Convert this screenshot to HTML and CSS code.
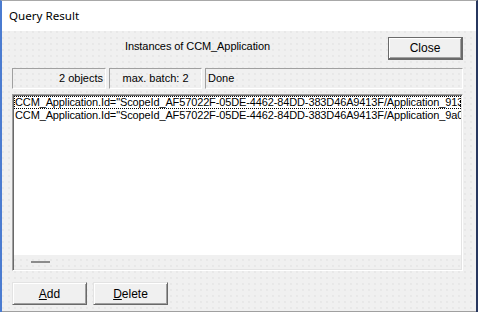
FILE: index.html
```html
<!DOCTYPE html>
<html>
<head>
<meta charset="utf-8">
<link rel="stylesheet" href="styles.css">
</head>
<body>
<div class="window">
  <div class="titlebar">Query Result</div>
  <div class="client">
    <div class="top-row">
      <div class="heading">Instances of CCM_Application</div>
      <button class="btn btn-default">Close</button>
    </div>
    <div class="statusbar">
      <div class="panel panel-count">2 objects</div>
      <div class="panel panel-batch">max. batch: 2</div>
      <div class="panel panel-state">Done</div>
    </div>
    <div class="listbox">
      <div class="list-items">
        <div class="item item-focus">CCM_Application.Id="ScopeId_AF57022F-05DE-4462-84DD-383D46A9413F/Application_913</div>
        <div class="item">CCM_Application.Id="ScopeId_AF57022F-05DE-4462-84DD-383D46A9413F/Application_9a0</div>
      </div>
      <div class="hscroll"><span class="thumb"></span></div>
    </div>
    <div class="bottom-row">
      <button class="btn"><u>A</u>dd</button>
      <button class="btn"><u>D</u>elete</button>
    </div>
  </div>
</div>
</body>
</html>
```
FILE: styles.css
```css
html, body {
  margin: 0;
  padding: 0;
  width: 478px;
  height: 312px;
  overflow: hidden;
  background: #f0f0f0;
}
.window {
  box-sizing: border-box;
  width: 478px;
  height: 312px;
  border-left: 2px solid #4a7bd0;
  border-right: 2px solid #27375f;
  border-top: 1px solid #a8a8a8;
  display: flex;
  flex-direction: column;
  font-family: "Liberation Sans", Arial, sans-serif;
  font-size: 11px;
  color: #000;
}
.titlebar {
  height: 30px;
  background: #fff;
  font-family: "Noto Sans", "Open Sans", sans-serif;
  font-size: 11.6px;
  line-height: 30px;
  padding-left: 7px;
  flex: none;
}
.client {
  flex: 1;
  display: flex;
  flex-direction: column;
  padding: 6px 13px 0 10px;
  border-bottom: 1px solid #a0a0a0;
  background-color: #f0f0f0;
  background-image: radial-gradient(circle at 1px 1px, #e3e3e3 0.6px, transparent 0.9px);
  background-size: 6px 6px;
}
.top-row {
  display: flex;
  align-items: flex-start;
  gap: 5px;
}
.heading {
  flex: 1;
  text-align: center;
  padding-top: 3px;
  line-height: 13px;
  letter-spacing: -0.08px;
}
.btn {
  box-sizing: border-box;
  width: 75px;
  height: 23px;
  padding: 0;
  margin: 0;
  font-family: "Liberation Sans", Arial, sans-serif;
  font-size: 11px;
  color: #000;
  background: #f0f0f0;
  border: 1px solid;
  border-color: #e3e3e3 #696969 #696969 #e3e3e3;
  box-shadow: inset 1px 1px #ffffff, inset -1px -1px #a0a0a0;
}
.btn-default {
  border: 1px solid #6a6a6a;
  border-right-width: 2px;
  border-bottom-width: 2px;
  box-shadow: inset 1px 1px #ffffff, inset -1px -1px #a0a0a0;
  font-size: 12px;
}
.statusbar {
  display: flex;
  gap: 3px;
  margin-top: 8px;
  height: 21px;
}
.panel {
  box-sizing: border-box;
  height: 21px;
  line-height: 19px;
  border: 1px solid;
  border-color: #a0a0a0 #ffffff #ffffff #a0a0a0;
  padding: 0 2px;
  white-space: nowrap;
}
.panel-count { width: 94px; text-align: right; }
.panel-batch { width: 93px; text-align: center; }
.panel-state { flex: 1; text-align: left; }
.listbox {
  box-sizing: border-box;
  margin-top: 5px;
  height: 177px;
  border: 1px solid;
  border-color: #a0a0a0 #ffffff #ffffff #a0a0a0;
  box-shadow: inset 1px 1px #696969, inset -1px -1px #e3e3e3;
  display: flex;
  flex-direction: column;
  padding: 1px;
}
.list-items {
  flex: 1;
  background: #fff;
  overflow: hidden;
}
.item {
  white-space: nowrap;
  overflow: hidden;
  height: 13px;
  line-height: 13px;
  box-sizing: border-box;
  padding-left: 1px;
  letter-spacing: -0.13px;
}
.item-focus {
  outline: 1px dotted #000;
  outline-offset: -1px;
}
.hscroll {
  height: 14px;
  flex: none;
  position: relative;
}
.thumb {
  position: absolute;
  left: 17px;
  top: 6px;
  width: 19px;
  height: 2px;
  background: #8c8c8c;
}
.bottom-row {
  display: flex;
  gap: 6px;
  margin-top: 11px;
}
.bottom-row .btn { font-size: 12px; }
```
